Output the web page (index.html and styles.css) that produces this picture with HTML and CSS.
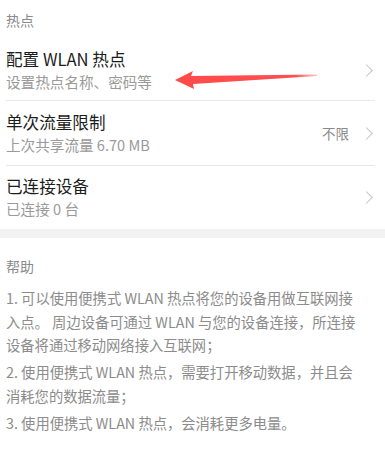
FILE: index.html
```html
<!DOCTYPE html>
<html lang="zh-CN">
<head>
<meta charset="utf-8">
<title>热点</title>
<link rel="stylesheet" href="styles.css">
</head>
<body>
<div class="page">
  <div class="group-title">热点</div>
  <div class="list">
    <div class="item item-first">
      <div class="texts">
        <div class="title">配置 WLAN 热点</div>
        <div class="sub">设置热点名称、密码等</div>
      </div>
      <div class="right"><span class="chev"></span></div>
    </div>
    <div class="item">
      <div class="texts">
        <div class="title">单次流量限制</div>
        <div class="sub">上次共享流量 6.70 MB</div>
      </div>
      <div class="right"><span class="value">不限</span><span class="chev"></span></div>
    </div>
    <div class="item item-last">
      <div class="texts">
        <div class="title">已连接设备</div>
        <div class="sub">已连接 0 台</div>
      </div>
      <div class="right"><span class="chev"></span></div>
    </div>
  </div>
  <div class="band"></div>
  <div class="help">
    <div class="help-title">帮助</div>
    <p class="help-p">1. 可以使用便携式 WLAN 热点将您的设备用做互联网接<br>入点。 周边设备可通过 WLAN 与您的设备连接，所连接<br>设备将通过移动网络接入互联网；</p>
    <p class="help-p">2. 使用便携式 WLAN 热点，需要打开移动数据，并且会<br>消耗您的数据流量；</p>
    <p class="help-p">3. 使用便携式 WLAN 热点，会消耗更多电量。</p>
  </div>
  <svg class="arrow" width="160" height="30" viewBox="0 0 160 30" xmlns="http://www.w3.org/2000/svg">
    <defs>
      <linearGradient id="fade" x1="0" y1="0" x2="1" y2="0">
        <stop offset="0" stop-color="#ff4a4a"/>
        <stop offset="0.85" stop-color="#ff4f4f"/>
        <stop offset="1" stop-color="#ff6b6b" stop-opacity="0.4"/>
      </linearGradient>
    </defs>
    <polygon fill="url(#fade)" points="5,15 23,6 21,11 147,9.5 147,11 23,19 24,24"/>
  </svg>
</div>
</body>
</html>
```
FILE: styles.css
```css
html, body {
  margin: 0;
  padding: 0;
  background: #ffffff;
}
body {
  font-family: "Noto Sans CJK SC", "Noto Sans", sans-serif;
  -webkit-font-smoothing: antialiased;
}
.page {
  position: relative;
  width: 385px;
  height: 459px;
  overflow: hidden;
}
.group-title {
  height: 40px;
  line-height: 40px;
  padding-left: 6px;
  font-size: 14px;
  color: #8a8a8a;
}
.list {
  margin: 0 10px 0 6px;
}
.item {
  display: flex;
  align-items: center;
  justify-content: space-between;
  height: 65px;
  border-bottom: 1px solid #e8e8e8;
  box-sizing: border-box;
}
.item-first {
  height: 61px;
}
.item-last {
  border-bottom: none;
  height: 63px;
}
.texts {
  display: flex;
  flex-direction: column;
}
.title {
  font-size: 16.6px;
  line-height: 23px;
  color: #1c1c1c;
}
.sub {
  font-size: 14.6px;
  line-height: 22px;
  color: #9a9a9a;
}
.right {
  display: flex;
  align-items: center;
  gap: 13px;
}
.value {
  font-size: 13.5px;
  color: #8a8a8a;
}
.chev {
  width: 8px;
  height: 8px;
  border-top: 1.3px solid #c4c4c4;
  border-right: 1.3px solid #c4c4c4;
  transform: rotate(45deg);
  margin-right: 4px;
}
.band {
  height: 9px;
  background: #f2f2f2;
}
.help {
  padding: 16px 6px 0 6px;
}
.help-title {
  font-size: 14px;
  line-height: 24px;
  color: #8a8a8a;
  margin-bottom: 8px;
}
.help-p {
  margin: 0 0 3.5px 0;
  font-size: 14.3px;
  line-height: 23.5px;
  color: #8c8c8c;
  white-space: nowrap;
}
.arrow {
  position: absolute;
  left: 170px;
  top: 65px;
}
```
